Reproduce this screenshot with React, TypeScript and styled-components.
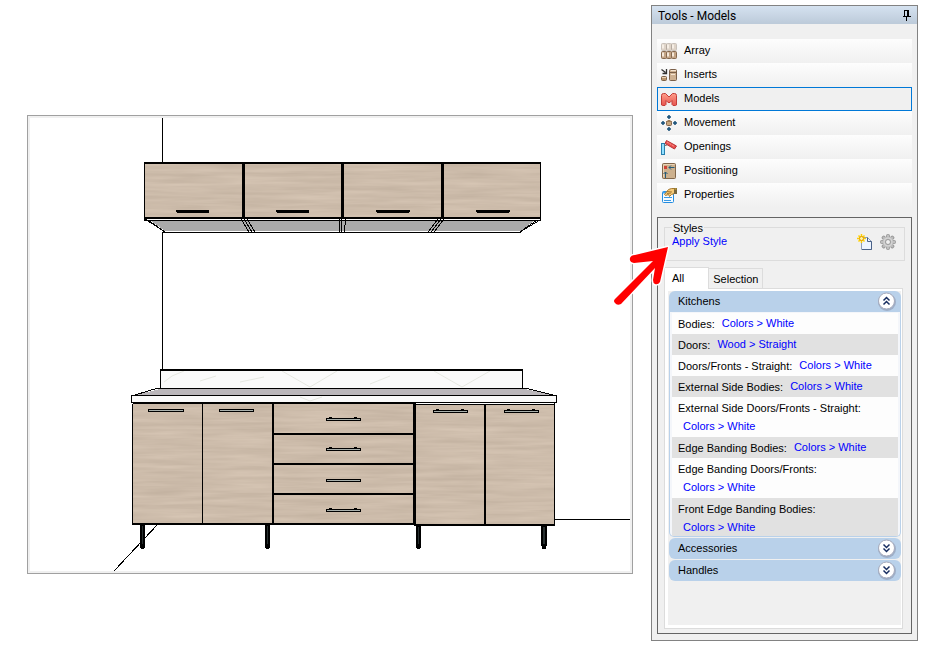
import React, { useState } from "react";
import styled, { createGlobalStyle } from "styled-components";

const GlobalStyle = createGlobalStyle`
  * { box-sizing: border-box; }
  body {
    margin: 0;
    background: #fff;
    color: #000;
    font-family: "Liberation Sans", Arial, sans-serif;
    font-size: 11px;
  }
  button { font: inherit; color: inherit; cursor: pointer; }
`;

const Page = styled.main`
  position: relative;
  display: flex;
  align-items: flex-start;
  gap: 18px;
  padding: 5px 8px 5px 27px;
`;

const Viewport = styled.figure`
  flex: 1;
  min-width: 0;
  margin: 110px 0 0;
  padding: 2px;
  border: 1px solid #a0a0a0;
  background: #f0f0f0;
`;

const Drawing = styled.svg`
  display: block;
  width: 100%;
  background: #fff;
`;

const Panel = styled.aside`
  flex: 0 0 267px;
  border: 1px solid #828282;
  background: #f0f0f0;
`;

const TitleBar = styled.header`
  display: flex;
  align-items: center;
  justify-content: space-between;
  height: 18px;
  padding: 0 5px 0 6px;
  background: linear-gradient(#d5e2f0, #bccad9);
`;

const Title = styled.h1`
  margin: 0;
  padding-top: 2px;
  font: 400 12px/18px Roboto, sans-serif;
`;

const IconButton = styled.button`
  display: flex;
  padding: 0;
  border: 0;
  background: none;
`;

const Menu = styled.nav`
  display: flex;
  flex-direction: column;
  padding: 15px 5px 10px;
`;

const MenuItem = styled.button<{ $active: boolean }>`
  display: flex;
  align-items: center;
  gap: 7px;
  height: 24px;
  padding: 0 3px;
  border: 1px solid ${(p) => (p.$active ? "#0078d7" : "transparent")};
  background: ${(p) => (p.$active ? "#f0f0f0" : "linear-gradient(#fdfdfd, #f0f0f0)")} border-box;
  text-align: left;
  line-height: 14px;

  span { margin-bottom: 2px; }
`;

const Workspace = styled.section`
  margin: 0 5px 6px;
  padding: 3px 6px 4px;
  border: 1px solid #646464;
`;

const StyleGroup = styled.fieldset`
  display: flex;
  align-items: flex-start;
  justify-content: space-between;
  min-width: 0;
  height: 40px;
  margin: 0;
  padding: 0 8px 0 7px;
  border: 1px solid #dcdcdc;

  legend { height: 13px; padding: 0 1px; line-height: 14px; }
  > a { line-height: 15px; }
`;

const GroupActions = styled.div`
  display: flex;
  gap: 7px;
`;

const Link = styled.a`
  color: #0000ff;
  text-decoration: none;
  line-height: 13px;
`;

const Tabs = styled.div`
  display: flex;
  align-items: flex-end;
  padding-top: 6px;
`;

const Tab = styled.button<{ $active: boolean }>`
  height: ${(p) => (p.$active ? 22 : 20)}px;
  margin-bottom: ${(p) => (p.$active ? -1 : 0)}px;
  padding: ${(p) => (p.$active ? "0 24px 2px 7px" : "1px 3px 0 4px")};
  border: 1px solid #dcdcdc;
  border-bottom: 0;
  border-left-width: ${(p) => (p.$active ? 1 : 0)}px;
  background: ${(p) => (p.$active ? "#fff" : "#f0f0f0")};
`;

const TabPage = styled.div`
  min-height: 341px;
  margin-right: 2px;
  padding: 2px 1px 3px 3px;
  border: 1px solid #dcdcdc;
  background: #fff;
`;

const Accordion = styled.div`
  display: flex;
  flex-direction: column;
  gap: 1px;
  min-height: 334px;
  padding: 0 0 0 1px;
  background: #f0f0f0;
`;

const SectionHeader = styled.button<{ $open: boolean }>`
  display: flex;
  align-items: center;
  justify-content: space-between;
  width: 100%;
  height: 21px;
  padding: 0 5px 1px 9px;
  border: 0;
  border-radius: ${(p) => (p.$open ? "6px 6px 0 0" : "6px")};
  background: #b9d1ea;
`;

const SectionBody = styled.div`
  padding: 1px 2px 0;
  border: 1px solid #b9d1ea;
  border-top: 0;
  border-radius: 0 0 5px 5px;
  background: #f4f6fa;
`;

const Property = styled.div<{ $stacked: boolean; $shaded: boolean }>`
  display: flex;
  flex-direction: ${(p) => (p.$stacked ? "column" : "row")};
  gap: ${(p) => (p.$stacked ? 5 : 7)}px;
  min-height: ${(p) => (p.$stacked ? 40 : 21)}px;
  padding: ${(p) => (p.$stacked ? "5px 6px 2px" : "4px 6px 3px")};
  background: ${(p) => (p.$shaded ? "#e1e1e1" : "#fdfdfd")};
  line-height: 13px;
  white-space: nowrap;

  span { padding-top: ${(p) => (p.$stacked ? 0 : 1)}px; }
  a { padding-left: ${(p) => (p.$stacked ? 5 : 0)}px; }
  &:last-child { min-height: 38px; }
`;

const Pointer = styled.svg`
  position: absolute;
  top: 242px;
  right: 254px;
  width: 60px;
  height: 66px;
  pointer-events: none;
`;

const iconShapes: Record<string, React.ReactNode> = {
  Array: (
    <>
      {[0, 8].map((y) =>
        [0, 5, 10].map((x) => (
          <g key={`${x}-${y}`} opacity={y === 0 ? 0.6 : 1}>
            <rect x={x + 0.5} y={y + 0.5} width="5" height="7" rx="1" fill={y === 0 ? "#cdbba8" : "#c3a486"} stroke={y === 0 ? "#a89c90" : "#86694f"} />
            <path d={`M${x + 2} ${y + 1.5}v4`} stroke="#f5e8d9" strokeWidth="2" />
          </g>
        )),
      )}
    </>
  ),
  Inserts: (
    <>
      <path d="M0.500 2.500l4 3M5.500 2v4.500H1.500" fill="none" stroke="#303030" strokeWidth="1.300" />
      <rect x="0.500" y="9.500" width="5" height="4" rx="1" fill="#b8946c" stroke="#7d6045" />
      <path d="M1 10.500h4" stroke="#ead2b6" />
      <rect x="8.500" y="2.500" width="7" height="11" rx="1" fill="#ceb192" stroke="#7b6049" />
      <path d="M9 5.500h6" stroke="#7b6049" />
      <path d="M10 3.500h5M10 7.500h4" stroke="#f5e5d2" />
    </>
  ),
  Models: (
    <path
      d="M.5 14V4.500Q.5 2.500 2.500 2.500H4.500L8 6 11.500 2.500h2q2 0 2 2V14l-1 .5h-2.500l-1-1V9.500l-2 2H7l-2-2v4l-1 1H1.500z"
      fill="url(#redShade)"
      stroke="#c33c38"
    />
  ),
  Movement: (
    <>
      <rect x="5.500" y="6.500" width="5" height="4" rx="1" fill="#c9a77d" stroke="#80624a" />
      <path d="M5 6.500h6M6.500 5.500h3" stroke="#9b7b58" />
      <path d="M8 0v4M6 2h4M8 12v4M6 14h4M0 8h4M2 6v4M12 8h4M14 6v4" stroke="#174f77" strokeWidth="1.500" />
    </>
  ),
  Openings: (
    <>
      <rect x="0.500" y="4.500" width="3" height="11" fill="#92e0ff" stroke="#287fae" />
      <path d="M5.500 1.500l10 5.500-2 3L4 4.500z" fill="#e94d4c" stroke="#b73739" />
      <path d="M6 3l7.500 4.500" stroke="#ff9991" strokeDasharray="2 1" />
      <path d="M3 7l3-1" stroke="#777" />
    </>
  ),
  Positioning: (
    <>
      <rect x="1.500" y="0.500" width="13" height="15" rx="1" fill="#ccb08d" stroke="#80664b" />
      <path d="M2.500 1.500h11M2.500 2v12" stroke="#ead3b6" />
      <rect x="3" y="3" width="3" height="3" fill="#cf4337" />
      <path d="M13.500 4.500H8M10 2.500l-2 2 2 2M4.500 15V9M2.500 11l2-2 2 2" stroke="#255b78" fill="none" />
    </>
  ),
  Properties: (
    <>
      <rect x="1.500" y="4.500" width="11" height="11" rx="1" fill="#f5faff" stroke="#238ce0" />
      <path d="M2 5.500h5" stroke="#3ba0f1" strokeWidth="2" />
      <path d="M3 10.500h8M3 13.500h7" stroke="#3999e4" />
      <path d="M3.500 7.500l4-5 3-1h3v5l-3 1-2 2-1-2-3 1z" fill="#f4c979" stroke="#a67a32" />
      <path d="M6 4.500l5 .5M6 6.500l4-.5" stroke="#a67a32" />
      <path d="M13 1h3v6h-3z" fill="#76653c" />
      <path d="M13.500 2h2" stroke="#e6b632" />
    </>
  ),
};

const ToolIcon = ({ name }: { name: string }) => (
  <svg width="16" height="16" viewBox="0 0 16 16" aria-hidden="true">
    <defs>
      <linearGradient id="redShade" x2="0" y2="1">
        <stop stopColor="#ff9d88" />
        <stop offset="1" stopColor="#e65450" />
      </linearGradient>
    </defs>
    {iconShapes[name]}
  </svg>
);

const PinIcon = () => (
  <svg width="10" height="12" viewBox="0 0 10 12" aria-hidden="true">
    <path d="M2.500 1v6M2 1.500h5M1 7.500h8M4.500 8v4" stroke="#000" />
    <path d="M6 1v6" stroke="#000" strokeWidth="2" />
  </svg>
);

const NewStyleIcon = () => (
  <svg width="16" height="16" viewBox="0 0 16 16" aria-hidden="true">
    <path d="M4.500 3.500h6l4 4v8h-10z" fill="#edf4ff" stroke="#8d9db8" />
    <path d="M10.500 3.500v4h4v8H5" fill="none" stroke="#4a6288" />
    <path d="M4.500 0v9M0 4.500h9M1.500 1.500l6 6M7.500 1.500l-6 6" stroke="#ffd000" strokeWidth="1.500" />
    <circle cx="4.500" cy="4.500" r="2" fill="#fff4a8" stroke="#e49b00" />
  </svg>
);

const GearIcon = () => (
  <svg width="16" height="16" viewBox="0 0 16 16" aria-hidden="true">
    <g fill="#bebebe" stroke="#999">
      {[0, 45, 90, 135].map((a) => (
        <rect key={a} x="6.500" y="0.500" width="3" height="15" rx="1" transform={`rotate(${a} 8 8)`} />
      ))}
      <circle cx="8" cy="8" r="5.500" stroke="none" fill="#c2c2c2" />
    </g>
    <circle cx="8" cy="8" r="4" fill="none" stroke="#d6d6d6" />
    <circle cx="8" cy="8" r="2.500" fill="#f0f0f0" stroke="#999" />
  </svg>
);

const Chevron = ({ open }: { open: boolean }) => (
  <svg width="19" height="19" viewBox="0 0 19 19" aria-hidden="true">
    <circle cx="10" cy="10" r="9" fill="#8c98b0" opacity=".6" />
    <circle cx="9.500" cy="9" r="8" fill="#fff" stroke="#a5aabc" />
    <path
      d={open ? "M6.500 8.500l3-3 3 3M6.500 12.500l3-3 3 3" : "M6.500 5.500l3 3 3-3M6.500 9.500l3 3 3-3"}
      fill="none"
      stroke="#172d60"
      strokeWidth="1.500"
    />
  </svg>
);

type Box = [number, number, number, number];

const doors: Box[] = [
  [145, 164, 97, 53], [245, 164, 96, 53], [344, 164, 97, 53], [444, 164, 96, 53],
  [133, 404, 69, 119], [203, 404, 69, 119],
  [274, 404, 139, 29], [274, 435, 139, 28], [274, 465, 139, 28], [274, 495, 139, 28],
  [416, 405, 68, 119], [486, 405, 68, 119],
];

const solids: Box[] = [
  [162, 118, 1, 44], [162, 232, 1, 137],
  [144, 162, 397, 2], [144, 217, 397, 2], [144, 162, 1, 58], [540, 162, 1, 58],
  [242, 162, 3, 57], [341, 162, 3, 57], [441, 162, 3, 57],
  [177, 210, 32, 3], [277, 210, 32, 3], [377, 210, 32, 3], [477, 210, 32, 3],
  [176, 210, 33, 2], [276, 210, 33, 2], [376, 210, 34, 2], [476, 210, 34, 2],
  [144, 220, 397, 1], [163, 232, 358, 1],
  [160, 369, 363, 2], [160, 370, 1, 18], [522, 370, 1, 18], [158, 388, 368, 1],
  [131, 395, 426, 1], [131, 395, 1, 8], [556, 396, 1, 7], [131, 402, 426, 1], [133, 403, 281, 1],
  [132, 404, 1, 120], [202, 404, 1, 120], [272, 404, 2, 120], [132, 523, 283, 2],
  [274, 433, 140, 2], [274, 463, 140, 2], [274, 493, 140, 2],
  [413, 403, 3, 121], [415, 404, 140, 1], [484, 404, 2, 120], [554, 403, 1, 121], [414, 524, 141, 2],
  [555, 519, 75, 1],
  [140, 524, 5, 24], [265, 524, 5, 24], [416, 526, 5, 22], [541, 526, 6, 20],
  [141, 547, 3, 2], [266, 547, 3, 2], [417, 547, 3, 2], [542, 546, 4, 3],
];

const handles: { x: number; y: number; width: number; posts: boolean }[] = [
  { x: 148, y: 409, width: 36, posts: false },
  { x: 219, y: 409, width: 35, posts: false },
  { x: 326, y: 418, width: 35, posts: true },
  { x: 326, y: 448, width: 35, posts: true },
  { x: 326, y: 479, width: 35, posts: false },
  { x: 326, y: 509, width: 35, posts: true },
  { x: 433, y: 410, width: 35, posts: true },
  { x: 504, y: 410, width: 35, posts: true },
];

const KitchenDrawing = () => (
  <Drawing viewBox="30 118 600 453" shapeRendering="crispEdges" role="img" aria-label="Kitchen front elevation">
    <defs>
      <filter id="grain" x="0" y="0" width="1" height="1" colorInterpolationFilters="sRGB">
        <feTurbulence type="fractalNoise" baseFrequency="0.014 0.22" numOctaves="3" seed="8" />
        <feColorMatrix values="0.1 0 0 0 0.752  0.1 0 0 0 0.686  0.1 0 0 0 0.618  0 0 0 0 1" />
      </filter>
    </defs>
    {doors.map(([x, y, width, height]) => (
      <rect key={`${x}-${y}`} x={x} y={y} width={width} height={height} fill="#cdbcab" filter="url(#grain)" />
    ))}
    <path d="M151 221H534L521 231H165z" fill="#ababab" />
    <path d="M161 371H522V388H161zM132 396H556V402H132z" fill="#fafafa" />
    <g fill="none" stroke="#dddfd6" strokeWidth="1" opacity=".7" shapeRendering="auto">
      <path d="M164 382l8-6 12-5M282 371l28 16 27-16M434 371l28 16 28-16M200 381l16-5M240 382l24-5M370 384l20-8M300 397l10 4 12-4" />
    </g>
    <path d="M160 389H525L553 395H135z" fill="#bab6ba" />
    <g stroke="#000" fill="none">
      <path d="M135 395l23-7M553 395l-28-7M114 571l44-47" />
      <path d="M145 219l20 13M148 220l17 12M241 219l8 13M244 219l8 13M247 219l8 13M340 219l-1 13M342 219l-1 13M346 219l-2 13M438 219l-10 13M441 219l-10 13M444 219l-10 13M540 220l-20 12M537 220l-17 12" />
    </g>
    <path d="M416 403H551V404H416z" fill="#fff" />
    {solids.map(([x, y, width, height], i) => (
      <rect key={i} x={x} y={y} width={width} height={height} />
    ))}
    {handles.map(({ x, y, width, posts }) => (
      <g key={`${x}-${y}`}>
        <rect x={x} y={y} width={width} height="3" />
        <rect x={x + 1} y={y + 1} width={width - 2} height="1" fill="#a9b0ac" />
        {posts && <path d={`M${x + 3} ${y - 1}h3v1h-3zM${x + 28} ${y - 1}h3v1h-3z`} />}
      </g>
    ))}
    <path d="M142 526h1v18h-1zM267 526h1v18h-1zM418 527h1v17h-1zM543 527h2v17h-2z" fill="#283030" />
  </Drawing>
);

const tools = ["Array", "Inserts", "Models", "Movement", "Openings", "Positioning", "Properties"];

const kitchenProperties = [
  { label: "Bodies:", value: "Colors > White", stacked: false },
  { label: "Doors:", value: "Wood > Straight", stacked: false },
  { label: "Doors/Fronts - Straight:", value: "Colors > White", stacked: false },
  { label: "External Side Bodies:", value: "Colors > White", stacked: false },
  { label: "External Side Doors/Fronts - Straight:", value: "Colors > White", stacked: true },
  { label: "Edge Banding Bodies:", value: "Colors > White", stacked: false },
  { label: "Edge Banding Doors/Fronts:", value: "Colors > White", stacked: true },
  { label: "Front Edge Banding Bodies:", value: "Colors > White", stacked: true },
];

const arrowShape = "M3 57L41 19L22 21Q17 20 18 16Q19 13 23 13L56 5L48 40Q46 43 43 42Q41 41 41 38L43 26L9 62Q5 64 3 61Q1 59 3 57z";

export default function App() {
  const [tool, setTool] = useState("Models");
  const [tab, setTab] = useState("All");
  const [open, setOpen] = useState("Kitchens");

  return (
    <>
      <GlobalStyle />
      <Page>
        <Viewport>
          <KitchenDrawing />
        </Viewport>
        <Panel>
          <TitleBar>
            <Title>Tools - Models</Title>
            <IconButton aria-label="Pin panel">
              <PinIcon />
            </IconButton>
          </TitleBar>
          <Menu>
            {tools.map((name) => (
              <MenuItem key={name} $active={tool === name} onClick={() => setTool(name)}>
                <ToolIcon name={name} />
                <span>{name}</span>
              </MenuItem>
            ))}
          </Menu>
          <Workspace>
            <StyleGroup>
              <legend>Styles</legend>
              <Link href="#apply-style">Apply Style</Link>
              <GroupActions>
                <IconButton aria-label="New style">
                  <NewStyleIcon />
                </IconButton>
                <IconButton aria-label="Style settings">
                  <GearIcon />
                </IconButton>
              </GroupActions>
            </StyleGroup>
            <Tabs role="tablist">
              {["All", "Selection"].map((name) => (
                <Tab key={name} role="tab" aria-selected={tab === name} $active={tab === name} onClick={() => setTab(name)}>
                  {name}
                </Tab>
              ))}
            </Tabs>
            <TabPage role="tabpanel">
              <Accordion>
                {["Kitchens", "Accessories", "Handles"].map((name) => (
                  <section key={name}>
                    <SectionHeader
                      $open={open === name}
                      aria-expanded={open === name}
                      onClick={() => setOpen(open === name ? "" : name)}
                    >
                      {name}
                      <Chevron open={open === name} />
                    </SectionHeader>
                    {name === "Kitchens" && open === name && (
                      <SectionBody>
                        {kitchenProperties.map(({ label, value, stacked }, i) => (
                          <Property key={label} $stacked={stacked} $shaded={i % 2 === 1}>
                            <span>{label}</span>
                            <Link href="#materials">{value}</Link>
                          </Property>
                        ))}
                      </SectionBody>
                    )}
                  </section>
                ))}
              </Accordion>
            </TabPage>
          </Workspace>
        </Panel>
        <Pointer viewBox="0 0 60 66" aria-hidden="true">
          <path d={arrowShape} fill="#ff0000" stroke="#fff" strokeWidth="3" strokeLinejoin="round" paintOrder="stroke" />
        </Pointer>
      </Page>
    </>
  );
}
